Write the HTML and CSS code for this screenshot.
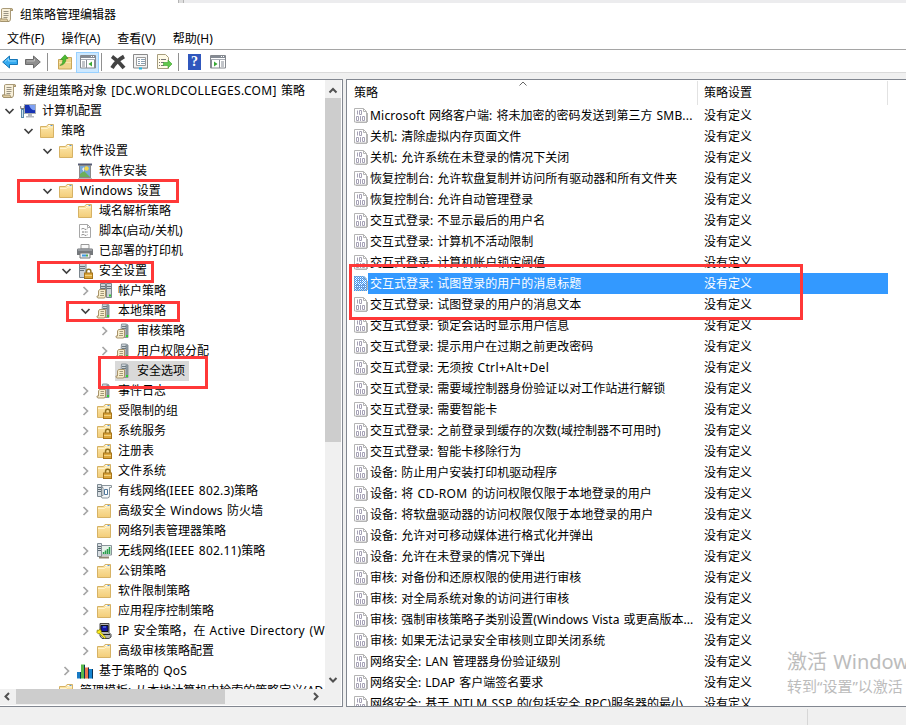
FILE: index.html
```
<!DOCTYPE html>
<html lang="zh-CN">
<head>
    <meta charset="UTF-8">
    <title>组策略管理编辑器</title>
    <link rel="stylesheet" href="styles.css">
</head>
<body>
    <!-- Icon sprite -->
    <svg class="sprite" width="0" height="0">
        <defs>
            <linearGradient id="g-folder" x1="0" y1="0" x2="0" y2="1"><stop offset="0" stop-color="#fde9af"/><stop offset="1" stop-color="#f3cd78"/></linearGradient>
            <pattern id="p-check" width="2" height="2" patternUnits="userSpaceOnUse"><path d="M0 0h1v1H0zM1 1h1v1H1z" fill="#3399ff"/></pattern>
        </defs>
        <symbol id="i-scroll" viewBox="0 0 16 16">
            <path d="M4.500 1.500h9q1.500 0 1 2h-2v8.500q0 2.500-2 2.500H3q-2-.5-1.500-2.500h2V3q0-1.500 1-1.500z" fill="#f8f0da" stroke="#a99a78"/>
            <path d="M1.500 12h7.500q.3 2.500 2 2.500H3q-1.800-.3-1.500-2.500zM12.500 3.500q0-2 1-2t1 2z" fill="#dfcda3" stroke="#9c8b66" stroke-width=".8"/>
            <path d="M5.500 4.500h5M5.500 6.500h5M5.500 8.500h5M5.500 10.500h4" stroke="#9a9484"/>
        </symbol>
        <symbol id="i-folder" viewBox="0 0 16 16">
            <path d="M1.500 3.500h6l1.500-2h5.500v13h-13z" fill="url(#g-folder)" stroke="#d6b265"/>
            <path d="M2 5.500h6.500l1.500-1.500h4" fill="none" stroke="#fff3cf"/>
            <path d="M9.500 2.500h4" stroke="#fff"/><path d="M11.500 2.500h2" stroke="#5b9bd5"/>
        </symbol>
        <symbol id="i-lock" viewBox="0 0 16 16">
            <path d="M9.500 11V8.500q0-2.200 2.200-2.200t2.200 2.200V11" fill="none" stroke="#8e7020" stroke-width="1.500"/>
            <rect x="7.500" y="10" width="8" height="5.500" fill="#dca63a" stroke="#a5741b"/>
            <path d="M8 12.500h7" stroke="#f3d27d"/>
        </symbol>
        <symbol id="i-computer" viewBox="0 0 16 16">
            <rect x="4.500" y="1.500" width="11" height="9" fill="#1733b4" stroke="#a8adb5"/>
            <path d="M9 2h6v5q-4 1-6-5z" fill="#7ea0f2"/>
            <path d="M8 11h4v2h2v1.500H6V13h2z" fill="#b3b8bf"/>
            <rect x="1.500" y="6.500" width="2" height="8" fill="#cfe3f0" stroke="#5788a8"/>
            <path d="M.7 3v2.500h3.600V3" fill="none" stroke="#777"/>
        </symbol>
        <symbol id="i-install" viewBox="0 0 16 16">
            <path d="M1 1.500h14" stroke="#555b74" stroke-width="2"/>
            <rect x="2.500" y="2.500" width="11" height="12" fill="#77a8d5" stroke="#8a8a8a"/>
            <path d="M3 14v-3l4-3 6 6z" fill="#6daf5a"/>
            <circle cx="9.500" cy="5.500" r="2.200" fill="#f8d84b"/>
            <path d="M5 6l2-2v5z" fill="#e8eff5"/>
            <path d="M1 15.500h14" stroke="#bbb"/>
        </symbol>
        <symbol id="i-script" viewBox="0 0 16 16">
            <path d="M2.500 1.500h8l3 3v10h-11z" fill="#fff" stroke="#a7a7a7"/>
            <path d="M10.500 1.500v3h3" fill="none" stroke="#a7a7a7"/>
            <path d="M4.500 6q2-1 3 0t3-.3M5 9h6M4.500 12q2-1 3 0t3-.3" fill="none" stroke="#777" stroke-dasharray="2 .7"/>
        </symbol>
        <symbol id="i-printer" viewBox="0 0 16 16">
            <path d="M4 1.500h8V6H4z" fill="#fafafa" stroke="#999"/>
            <path d="M1 5.500h14q1 0 1 1.500v5H0V7q0-1.500 1-1.500z" fill="#75787c"/>
            <path d="M1 7h14" stroke="#b8bbc0"/>
            <path d="M3 10h10v5H3z" fill="#eef2f6" stroke="#777"/>
            <path d="M5 12.500h4" stroke="#3f9be0" stroke-width="2"/><path d="M9 12.500h2" stroke="#54a955" stroke-width="2"/>
        </symbol>
        <symbol id="i-tower" viewBox="0 0 16 16">
            <path d="M6.500 1h4.500l2 1v12.500H5.500z" fill="#ccd3d8" stroke="#8d969d"/>
            <path d="M10.500 1.500v13h2.500V2z" fill="#87939b"/>
            <path d="M7 3.500h4M7 5.500h4" stroke="#6d7980"/>
            <path d="M11 13h2" stroke="#30d030" stroke-width="2"/>
        </symbol>
        <symbol id="i-sheet" viewBox="0 0 16 16">
            <path d="M3.500 6.500h6v6.500q0 2-1.500 2H2q-1.300-.3-1-2h1.500V8z" fill="#f7edcc" stroke="#a8936a"/>
            <path d="M4.500 8.500h3.500M4.500 10.500h3.500M4 12.500h4" stroke="#a39879"/>
        </symbol>
        <symbol id="i-policy" viewBox="0 0 16 16"><use href="#i-tower"/><use href="#i-sheet"/></symbol>
        <symbol id="i-account" viewBox="0 0 16 16">
            <path d="M4.500.5h5v12h-5zM10.500.5h5v14h-5z" fill="#ccd3d8" stroke="#7b858c"/>
            <path d="M5 3.500h4M11 3.500h4M5 5.500h4M11 5.500h4" stroke="#69757d"/>
            <path d="M13 12.500h2" stroke="#30d030" stroke-width="2"/><use href="#i-sheet"/>
        </symbol>
        <symbol id="i-security" viewBox="0 0 16 16">
            <path d="M2.500.5h5.500l1 1v13H2.500z" fill="#ccd3d8" stroke="#7b858c"/>
            <path d="M3 3.500h5M3 5.500h5M3 7.500h4" stroke="#69757d"/><use href="#i-lock"/>
        </symbol>
        <symbol id="i-locked" viewBox="0 0 16 16"><use href="#i-folder"/><use href="#i-lock"/></symbol>
        <symbol id="i-wired" viewBox="0 0 16 16">
            <path d="M1.500 1.500h4v12h-4z" fill="#dae0e4" stroke="#7e8a92"/><path d="M2 4.500h3M2 6.500h3M2 8.500h3" stroke="#5c6971"/>
            <path d="M6 2.500h9.500v2h-2v8q0 2.500-2 2.500H6q-1.500-1 0-2.500h1V4.500H6z" fill="#f4f6f7" stroke="#8a949b"/>
            <path d="M8.500 6.500h3v5h-3z" fill="#fff" stroke="#51789c"/>
        </symbol>
        <symbol id="i-wifi" viewBox="0 0 16 16">
            <path d="M1.500.5h4v13h-4z" fill="#dae0e4" stroke="#7e8a92"/><path d="M2 3.500h3M2 5.500h3M2 7.500h3" stroke="#5c6971"/>
            <path d="M5.500 2.500h10v9.500h-10z" fill="#e6f2ea" stroke="#8a949b"/>
            <path d="M7.500 11V9M9.500 11V7.500M11.500 11V6M13.500 11V4" stroke="#289c4b" stroke-width="1.500"/>
            <path d="M3 14.500h10" stroke="#8f8573" stroke-width="2"/>
        </symbol>
        <symbol id="i-ipsec" viewBox="0 0 16 16">
            <path d="M4 .5h9v9l2 2v2.500l-2 1.500H6L4 13z" fill="#b5b5b5" stroke="#444"/>
            <path d="M5 2.500h7v6H5z" fill="#1515a6" stroke="#111"/><path d="M7 4h3" stroke="#6fa0ff"/>
            <path d="M7 11.500h7" stroke="#222"/>
            <path d="M1 7l2 .5L3.500 6l2 2-.5 1.500 5 5-1.500 1-5-5-1.500.3-1.500-2L1.500 8.500z" fill="#ffed18" stroke="#7a7300" stroke-width=".6"/>
        </symbol>
        <symbol id="i-qos" viewBox="0 0 16 16">
            <path d="M0 9h4v6.500H0z" fill="#187bc5"/><path d="M4 1.500h4v14H4z" fill="#59b94a"/>
            <path d="M8 4.500h4v11H8z" fill="#ee7450"/><path d="M12 6h4v9.500h-4z" fill="#1585d1"/>
            <path d="M3.500 9v6.500M7.500 2v13.500M11.500 4.500v11M15.500 6v9.500" stroke="#0d3154"/>
        </symbol>
        <symbol id="i-item" viewBox="0 0 14 15">
            <path d="M.5.5h9l3 3v10.500H.5z" fill="#fff" stroke="#b4b4b4"/>
            <path d="M9.500.5v3h3" fill="none" stroke="#b4b4b4"/>
            <path d="M3.500 2.500v4M5.500 2.500h2v4h-2zM2.500 8.500h2v4h-2zM6.500 8v5M8.500 8.500h2v4h-2z" fill="none" stroke="#a5a1b5"/>
            <path d="M2 14.500h11M13.500 5v9" stroke="#b5b5b5"/>
        </symbol>
        <symbol id="i-item-selected" viewBox="0 0 14 15">
            <use href="#i-item"/><path d="M0 0h10l3 3v12H0z" fill="url(#p-check)"/>
        </symbol>
        <symbol id="i-down" viewBox="0 0 16 16"><path d="M3.500 6l4 4 4-4" fill="none" stroke="#404040" stroke-width="1.700"/></symbol>
        <symbol id="i-right" viewBox="0 0 16 16"><path d="M5.500 4l4 4-4 4" fill="none" stroke="#a6a6a6" stroke-width="1.700"/></symbol>
        <symbol id="i-window" viewBox="0 0 16 14">
            <path d="M.5.5h15v12.500H.5z" fill="#fff" stroke="#85898f"/>
            <path d="M1 2h14" stroke="#858b94" stroke-width="2"/><path d="M1 4.500h14" stroke="#a8adb5"/>
            <path d="M11 1.500h1M13 1.500h1" stroke="#fff"/>
        </symbol>
    </svg>

    <div class="window">
        <div class="titlebar">
            <div class="backdrop"></div>
            <svg class="icon"><use href="#i-scroll"/></svg>
            <span>组策略管理编辑器</span>
        </div>
        <div class="menubar">
            <span>文件(F)</span><span>操作(A)</span><span>查看(V)</span><span>帮助(H)</span>
        </div>
        <div class="toolbar">
            <svg class="tool back" viewBox="0 0 16 16"><path d="M.7 8l6.800-6v3.500h8v5h-8V14z" fill="#35aaf0" stroke="#1676b7"/><path d="M3 7.500l3.500-3V7H14" fill="none" stroke="#8bd5fb"/></svg>
            <svg class="tool forward" viewBox="0 0 16 16"><path d="M15.300 8l-6.800-6v3.500h-8v5h8V14z" fill="#8f8f8f" stroke="#6a6a6a"/><path d="M2 7h7.500V5" fill="none" stroke="#bcbcbc"/></svg>
            <i class="sep"></i>
            <svg class="tool up" viewBox="0 0 16 16"><path d="M1.500 5.500h5l2-2h6v11.500h-13z" fill="#f0d58c" stroke="#c9a658"/><path d="M2 8.500h12" stroke="#fae8ae"/><path d="M3 11.500q3-1.500 3-6H3.500L8 .8l3 3.700H9q0 6-6 7z" fill="#4dbb31" stroke="#318c20" stroke-width=".6"/></svg>
            <span class="pressed"><svg viewBox="0 0 16 14"><use href="#i-window"/><path d="M6.500 5v8M2 7h3M2 9h3M2 11h3M14.500 5v8" stroke="#858b94"/><path d="M12 6.500v5L8.500 9z" fill="#39a935"/></svg></span>
            <i class="sep near"></i>
            <svg class="tool delete" viewBox="0 0 16 16"><path d="M2 2.500q6 4 12 11.500M14 2.500Q6 7 2 14" fill="none" stroke="#434343" stroke-width="3.800"/></svg>
            <svg class="tool props" viewBox="0 0 16 16"><path d="M.5.500h14v13.500H.5z" fill="#f4f4f4" stroke="#8a8a8a"/><path d="M3.500 3.500h9v8h-9z" fill="#fff" stroke="#9b9b9b"/><path d="M5 5.500h2M8 5.500h4M5 7.500h2M8 7.500h4M5 9.500h2M8 9.500h4" stroke="#8ca0b1"/><path d="M6 14.500h3" stroke="#22b8e5" stroke-width="2"/><path d="M9.500 14.500h5" stroke="#aaa"/></svg>
            <svg class="tool export" viewBox="0 0 16 16"><path d="M1.500.5h8l3 3v11h-11z" fill="#fffbe8" stroke="#a79d7d"/><path d="M3 5.500h1M5 5.500h5M3 8.500h1M5 8.500h3M3 11.500h1M5 11.500h3" stroke="#777"/><path d="M7.500 8.500H12V6l4 4-4 4v-2.500H7.500z" fill="#61c84a" stroke="#3b9e2c" stroke-width=".6"/></svg>
            <i class="sep"></i>
            <span class="help">?</span>
            <svg class="tool actions" viewBox="0 0 16 14"><use href="#i-window"/><path d="M9.500 5v8M11 7h3M11 9h3M11 11h3M1.500 5v8" stroke="#858b94"/><path d="M4 6.500v5L7.500 9z" fill="#39a935"/></svg>
        </div>

        <div class="panes">
            <div class="tree-pane">
                <div class="tree">
                    <div class="node root"><svg class="icon"><use href="#i-scroll"/></svg><span>新建组策略对象 <i class="en wide">[DC.WORLDCOLLEGES.COM]</i> 策略</span></div>
                    <div class="node l1"><svg class="arrow"><use href="#i-down"/></svg><svg class="icon"><use href="#i-computer"/></svg><span>计算机配置</span></div>
                    <div class="node l2"><svg class="arrow"><use href="#i-down"/></svg><svg class="icon"><use href="#i-folder"/></svg><span>策略</span></div>
                    <div class="node l3"><svg class="arrow"><use href="#i-down"/></svg><svg class="icon"><use href="#i-folder"/></svg><span>软件设置</span></div>
                    <div class="node l4"><svg class="arrow"></svg><svg class="icon"><use href="#i-install"/></svg><span>软件安装</span></div>
                    <div class="node l3"><svg class="arrow"><use href="#i-down"/></svg><svg class="icon"><use href="#i-folder"/></svg><span><i class="en">Windows</i> 设置</span></div>
                    <div class="node l4"><svg class="arrow"></svg><svg class="icon"><use href="#i-folder"/></svg><span>域名解析策略</span></div>
                    <div class="node l4"><svg class="arrow"></svg><svg class="icon"><use href="#i-script"/></svg><span>脚本(启动/关机)</span></div>
                    <div class="node l4"><svg class="arrow"></svg><svg class="icon"><use href="#i-printer"/></svg><span>已部署的打印机</span></div>
                    <div class="node l4"><svg class="arrow"><use href="#i-down"/></svg><svg class="icon"><use href="#i-security"/></svg><span>安全设置</span></div>
                    <div class="node l5"><svg class="arrow"><use href="#i-right"/></svg><svg class="icon"><use href="#i-account"/></svg><span>帐户策略</span></div>
                    <div class="node l5"><svg class="arrow"><use href="#i-down"/></svg><svg class="icon"><use href="#i-policy"/></svg><span>本地策略</span></div>
                    <div class="node l6"><svg class="arrow"><use href="#i-right"/></svg><svg class="icon"><use href="#i-policy"/></svg><span>审核策略</span></div>
                    <div class="node l6"><svg class="arrow"><use href="#i-right"/></svg><svg class="icon"><use href="#i-policy"/></svg><span>用户权限分配</span></div>
                    <div class="node l6 current"><svg class="arrow"></svg><svg class="icon"><use href="#i-policy"/></svg><span>安全选项</span></div>
                    <div class="node l5"><svg class="arrow"><use href="#i-right"/></svg><svg class="icon"><use href="#i-policy"/></svg><span>事件日志</span></div>
                    <div class="node l5"><svg class="arrow"><use href="#i-right"/></svg><svg class="icon"><use href="#i-locked"/></svg><span>受限制的组</span></div>
                    <div class="node l5"><svg class="arrow"><use href="#i-right"/></svg><svg class="icon"><use href="#i-locked"/></svg><span>系统服务</span></div>
                    <div class="node l5"><svg class="arrow"><use href="#i-right"/></svg><svg class="icon"><use href="#i-locked"/></svg><span>注册表</span></div>
                    <div class="node l5"><svg class="arrow"><use href="#i-right"/></svg><svg class="icon"><use href="#i-locked"/></svg><span>文件系统</span></div>
                    <div class="node l5"><svg class="arrow"><use href="#i-right"/></svg><svg class="icon"><use href="#i-wired"/></svg><span>有线网络(<i class="en">IEEE 802.3</i>)策略</span></div>
                    <div class="node l5"><svg class="arrow"><use href="#i-right"/></svg><svg class="icon"><use href="#i-folder"/></svg><span>高级安全 <i class="en">Windows</i> 防火墙</span></div>
                    <div class="node l5"><svg class="arrow"></svg><svg class="icon"><use href="#i-folder"/></svg><span>网络列表管理器策略</span></div>
                    <div class="node l5"><svg class="arrow"><use href="#i-right"/></svg><svg class="icon"><use href="#i-wifi"/></svg><span>无线网络(<i class="en">IEEE 802.11</i>)策略</span></div>
                    <div class="node l5"><svg class="arrow"><use href="#i-right"/></svg><svg class="icon"><use href="#i-folder"/></svg><span>公钥策略</span></div>
                    <div class="node l5"><svg class="arrow"><use href="#i-right"/></svg><svg class="icon"><use href="#i-folder"/></svg><span>软件限制策略</span></div>
                    <div class="node l5"><svg class="arrow"><use href="#i-right"/></svg><svg class="icon"><use href="#i-folder"/></svg><span>应用程序控制策略</span></div>
                    <div class="node l5"><svg class="arrow"><use href="#i-right"/></svg><svg class="icon"><use href="#i-ipsec"/></svg><span>IP 安全策略，在 <i class="en wide">Active Directory (WO</i></span></div>
                    <div class="node l5"><svg class="arrow"><use href="#i-right"/></svg><svg class="icon"><use href="#i-folder"/></svg><span>高级审核策略配置</span></div>
                    <div class="node l4"><svg class="arrow"><use href="#i-right"/></svg><svg class="icon"><use href="#i-qos"/></svg><span>基于策略的 <i class="en">QoS</i></span></div>
                    <div class="node l3"><svg class="arrow"></svg><svg class="icon"><use href="#i-folder"/></svg><span>管理模板: 从本地计算机中检索的策略定义(AD</span></div>
                </div>
                <div class="vscroll">
                    <svg class="sb-arrow" viewBox="0 0 16 16"><path d="M4.500 10.500L8 7l3.500 3.500" fill="none" stroke="#505050" stroke-width="2"/></svg>
                    <div class="thumb"></div>
                    <svg class="sb-arrow" viewBox="0 0 16 16"><path d="M4.500 6L8 9.500 11.500 6" fill="none" stroke="#505050" stroke-width="2"/></svg>
                </div>
                <div class="hscroll">
                    <svg class="sb-arrow" viewBox="0 0 16 16"><path d="M9 4L5.500 7.500 9 11" fill="none" stroke="#505050" stroke-width="2"/></svg>
                    <div class="thumb"></div>
                    <svg class="sb-arrow" viewBox="0 0 16 16"><path d="M6 4l3.500 3.500L6 11" fill="none" stroke="#505050" stroke-width="2"/></svg>
                </div>
            </div>

            <div class="list-pane">
                <div class="list-head">
                    <div class="name">策略<svg class="sort" viewBox="0 0 8 5"><path d="M.5 4.500L4 1l3.500 3.500" fill="none" stroke="#666"/></svg></div>
                    <div class="value">策略设置</div>
                </div>
                <div class="row"><svg><use href="#i-item"/></svg><span class="name"><i class="en">Microsoft</i> 网络客户端: 将未加密的密码发送到第三方 <i class="en">SMB...</i></span><span class="value">没有定义</span></div>
                <div class="row"><svg><use href="#i-item"/></svg><span class="name">关机: 清除虚拟内存页面文件</span><span class="value">没有定义</span></div>
                <div class="row"><svg><use href="#i-item"/></svg><span class="name">关机: 允许系统在未登录的情况下关闭</span><span class="value">没有定义</span></div>
                <div class="row"><svg><use href="#i-item"/></svg><span class="name">恢复控制台: 允许软盘复制并访问所有驱动器和所有文件夹</span><span class="value">没有定义</span></div>
                <div class="row"><svg><use href="#i-item"/></svg><span class="name">恢复控制台: 允许自动管理登录</span><span class="value">没有定义</span></div>
                <div class="row"><svg><use href="#i-item"/></svg><span class="name">交互式登录: 不显示最后的用户名</span><span class="value">没有定义</span></div>
                <div class="row"><svg><use href="#i-item"/></svg><span class="name">交互式登录: 计算机不活动限制</span><span class="value">没有定义</span></div>
                <div class="row"><svg><use href="#i-item"/></svg><span class="name">交互式登录: 计算机帐户锁定阈值</span><span class="value">没有定义</span></div>
                <div class="row selected"><svg><use href="#i-item-selected"/></svg><span class="name">交互式登录: 试图登录的用户的消息标题</span><span class="value">没有定义</span></div>
                <div class="row"><svg><use href="#i-item"/></svg><span class="name">交互式登录: 试图登录的用户的消息文本</span><span class="value">没有定义</span></div>
                <div class="row"><svg><use href="#i-item"/></svg><span class="name">交互式登录: 锁定会话时显示用户信息</span><span class="value">没有定义</span></div>
                <div class="row"><svg><use href="#i-item"/></svg><span class="name">交互式登录: 提示用户在过期之前更改密码</span><span class="value">没有定义</span></div>
                <div class="row"><svg><use href="#i-item"/></svg><span class="name">交互式登录: 无须按 <i class="en wide">Ctrl+Alt+Del</i></span><span class="value">没有定义</span></div>
                <div class="row"><svg><use href="#i-item"/></svg><span class="name">交互式登录: 需要域控制器身份验证以对工作站进行解锁</span><span class="value">没有定义</span></div>
                <div class="row"><svg><use href="#i-item"/></svg><span class="name">交互式登录: 需要智能卡</span><span class="value">没有定义</span></div>
                <div class="row"><svg><use href="#i-item"/></svg><span class="name">交互式登录: 之前登录到缓存的次数(域控制器不可用时)</span><span class="value">没有定义</span></div>
                <div class="row"><svg><use href="#i-item"/></svg><span class="name">交互式登录: 智能卡移除行为</span><span class="value">没有定义</span></div>
                <div class="row"><svg><use href="#i-item"/></svg><span class="name">设备: 防止用户安装打印机驱动程序</span><span class="value">没有定义</span></div>
                <div class="row"><svg><use href="#i-item"/></svg><span class="name">设备: 将 <i class="en wide">CD-ROM</i> 的访问权限仅限于本地登录的用户</span><span class="value">没有定义</span></div>
                <div class="row"><svg><use href="#i-item"/></svg><span class="name">设备: 将软盘驱动器的访问权限仅限于本地登录的用户</span><span class="value">没有定义</span></div>
                <div class="row"><svg><use href="#i-item"/></svg><span class="name">设备: 允许对可移动媒体进行格式化并弹出</span><span class="value">没有定义</span></div>
                <div class="row"><svg><use href="#i-item"/></svg><span class="name">设备: 允许在未登录的情况下弹出</span><span class="value">没有定义</span></div>
                <div class="row"><svg><use href="#i-item"/></svg><span class="name">审核: 对备份和还原权限的使用进行审核</span><span class="value">没有定义</span></div>
                <div class="row"><svg><use href="#i-item"/></svg><span class="name">审核: 对全局系统对象的访问进行审核</span><span class="value">没有定义</span></div>
                <div class="row"><svg><use href="#i-item"/></svg><span class="name">审核: 强制审核策略子类别设置(Windows Vista 或更高版本...</span><span class="value">没有定义</span></div>
                <div class="row"><svg><use href="#i-item"/></svg><span class="name">审核: 如果无法记录安全审核则立即关闭系统</span><span class="value">没有定义</span></div>
                <div class="row"><svg><use href="#i-item"/></svg><span class="name">网络安全: LAN 管理器身份验证级别</span><span class="value">没有定义</span></div>
                <div class="row"><svg><use href="#i-item"/></svg><span class="name">网络安全: LDAP 客户端签名要求</span><span class="value">没有定义</span></div>
                <div class="row"><svg><use href="#i-item"/></svg><span class="name">网络安全: 基于 <i class="en">NTLM SSP</i> 的(包括安全 <i class="en">RPC</i>)服务器的最小...</span><span class="value">没有定义</span></div>
            </div>
        </div>
        <div class="statusbar"><div class="status-main"></div></div>

        <!-- Red markers over the tree and the list -->
        <div class="mark mark-windows"></div>
        <div class="mark mark-security"></div>
        <div class="mark mark-local"></div>
        <div class="mark mark-options"></div>
        <div class="mark mark-rows"></div>

        <div class="watermark">
            <div class="big">激活 Windows</div>
            <div class="small">转到“设置”以激活</div>
        </div>
    </div>
</body>
</html>
```
FILE: styles.css
```
body {
    margin: 0;
    background: #f0f0f0;
    color: #000;
    font: 12px/20px "Noto Sans", "Noto Sans CJK SC", sans-serif;
    word-spacing: 1px;
}
.sprite {
    display: block;
}
.window {
    position: relative;
    display: flex;
    flex-direction: column;
    width: 906px;
    height: 725px;
    overflow: hidden;
}
.icon {
    width: 16px;
    height: 16px;
    flex: none;
}
.en {
    font-style: normal;
    letter-spacing: .2px;
}
.wide {
    letter-spacing: .36px;
}

/* Title, menu and toolbar */
.titlebar {
    position: relative;
    display: flex;
    align-items: center;
    gap: 6px;
    height: 24px;
    padding-top: 5px;
    box-sizing: border-box;
    background: #fff;
}
.titlebar .icon {
    margin-left: -2px;
}
.backdrop {
    position: absolute;
    top: 0;
    left: 178px;
    right: 0;
    height: 3px;
    box-sizing: border-box;
    background: #ececee;
    border-left: 1px solid #b4b4b4;
}
.backdrop::after {
    content: "";
    display: block;
    width: 4px;
    height: 3px;
    background: #dedede;
    border-right: 1px solid #b4b4b4;
}
.menubar {
    display: flex;
    gap: 17px;
    height: 25px;
    padding: 4px 7px 0;
    box-sizing: border-box;
    background: #fff;
    line-height: 21px;
}
.toolbar {
    display: flex;
    align-items: center;
    height: 24px;
    box-sizing: border-box;
    border-top: 1px solid #a5a5a5;
    border-bottom: 1px solid #dadada;
    background: #fff;
    padding: 2px 0 0 2px;
}
.tool {
    width: 16px;
    height: 16px;
    flex: none;
}
.forward {
    margin-left: 7px;
}
.sep {
    width: 1px;
    height: 18px;
    margin: 0 9px 0 6px;
    background: #909090;
}
.sep.near {
    margin: 0 8px 0 2px;
}
.pressed {
    display: flex;
    align-items: center;
    justify-content: center;
    width: 21px;
    height: 19px;
    margin-left: 3px;
    background: #cce8ff;
    border: 1px solid #99d1ff;
}
.pressed svg,
.actions {
    width: 16px;
    height: 14px;
}
.props,
.export {
    margin-left: 7px;
}
.help {
    width: 13px;
    height: 16px;
    background: #3057bd;
    color: #fff;
    font: bold 14px/16px "Liberation Serif", serif;
    text-align: center;
}
.actions {
    margin-left: 9px;
}

/* Panes */
.panes {
    display: flex;
    gap: 3px;
    height: 628px;
    margin-top: 6px;
}
.tree-pane {
    display: grid;
    grid-template-columns: 325px 16px;
    grid-template-rows: 609px 16px;
    box-sizing: border-box;
    width: 343px;
    border: 1px solid #828790;
    border-left: 0;
    background: #fff;
}
.tree {
    padding-top: 1px;
    overflow: hidden;
}
.node {
    display: flex;
    align-items: center;
    height: 20px;
    white-space: nowrap;
}
.node span {
    margin-left: 4px;
    padding: 0 2px;
}
.arrow {
    width: 16px;
    height: 16px;
    margin-right: 2px;
    flex: none;
}
.root { padding-left: 1px; }
.l1 { padding-left: 2px; }
.l2 { padding-left: 21px; }
.l3 { padding-left: 40px; }
.l4 { padding-left: 59px; }
.l5 { padding-left: 78px; }
.l6 { padding-left: 97px; }
.current span {
    margin-left: 0;
    padding: 0 4px 0 6px;
    background: #d9d9d9;
}
.current .icon {
    padding: 2px 0;
    background: #d9d9d9;
}
.vscroll,
.hscroll {
    display: flex;
    background: #f0f0f0;
}
.vscroll {
    flex-direction: column;
    padding: 2px 0 1px;
}
.vscroll .thumb {
    height: 344px;
    margin-bottom: auto;
}
.hscroll {
    grid-column: 1 / 3;
    padding-right: 17px;
}
.hscroll .thumb {
    width: 209px;
    height: 15px;
    margin-right: auto;
}
.thumb {
    background: #cdcdcd;
}
.sb-arrow {
    width: 16px;
    height: 16px;
    flex: none;
}

/* Policy list */
.list-pane {
    flex: 1;
    box-sizing: border-box;
    border: 1px solid #828790;
    border-right: 0;
    background: #fff;
    overflow: hidden;
}
.list-head {
    display: flex;
    height: 25px;
    line-height: 24px;
}
.list-head div {
    height: 24px;
    margin-top: 1px;
    box-sizing: border-box;
    border-right: 1px solid #e2e2e2;
}
.list-head .name {
    position: relative;
    width: 351px;
    padding-left: 7px;
}
.list-head .value {
    width: 190px;
    padding-left: 6px;
}
.sort {
    position: absolute;
    top: 0;
    left: 172px;
    width: 8px;
    height: 5px;
}
.row {
    display: flex;
    align-items: center;
    width: 541px;
    height: 21px;
    line-height: 21px;
    white-space: nowrap;
}
.row svg {
    width: 14px;
    height: 15px;
    margin-left: 7px;
    flex: none;
}
.row .name {
    width: 327px;
    padding-left: 2px;
    flex: none;
}
.row .value {
    flex: 1;
    padding-left: 7px;
}
.selected span {
    background: #3399ff;
    color: #fff;
}
.statusbar {
    flex: 1;
    display: flex;
    margin-top: 2px;
}
.status-main {
    width: 807px;
    border-right: 1px solid #d7d7d7;
}

/* Overlays */
.mark {
    position: absolute;
    box-sizing: border-box;
    border: 3px solid #ff3838;
}
.mark-windows { left: 17px; top: 179px; width: 162px; height: 24px; }
.mark-security { left: 37px; top: 261px; width: 117px; height: 22px; }
.mark-local { left: 66px; top: 301px; width: 114px; height: 21px; }
.mark-options { left: 98px; top: 356px; width: 110px; height: 33px; }
.mark-rows { left: 349px; top: 264px; width: 454px; height: 56px; }
.watermark {
    position: absolute;
    left: 787px;
    top: 648px;
    color: #bcbcbc;
    white-space: nowrap;
}
.watermark .big {
    font-size: 20px;
    line-height: 28px;
}
.watermark .small {
    font-size: 15px;
    line-height: 20px;
}
```
